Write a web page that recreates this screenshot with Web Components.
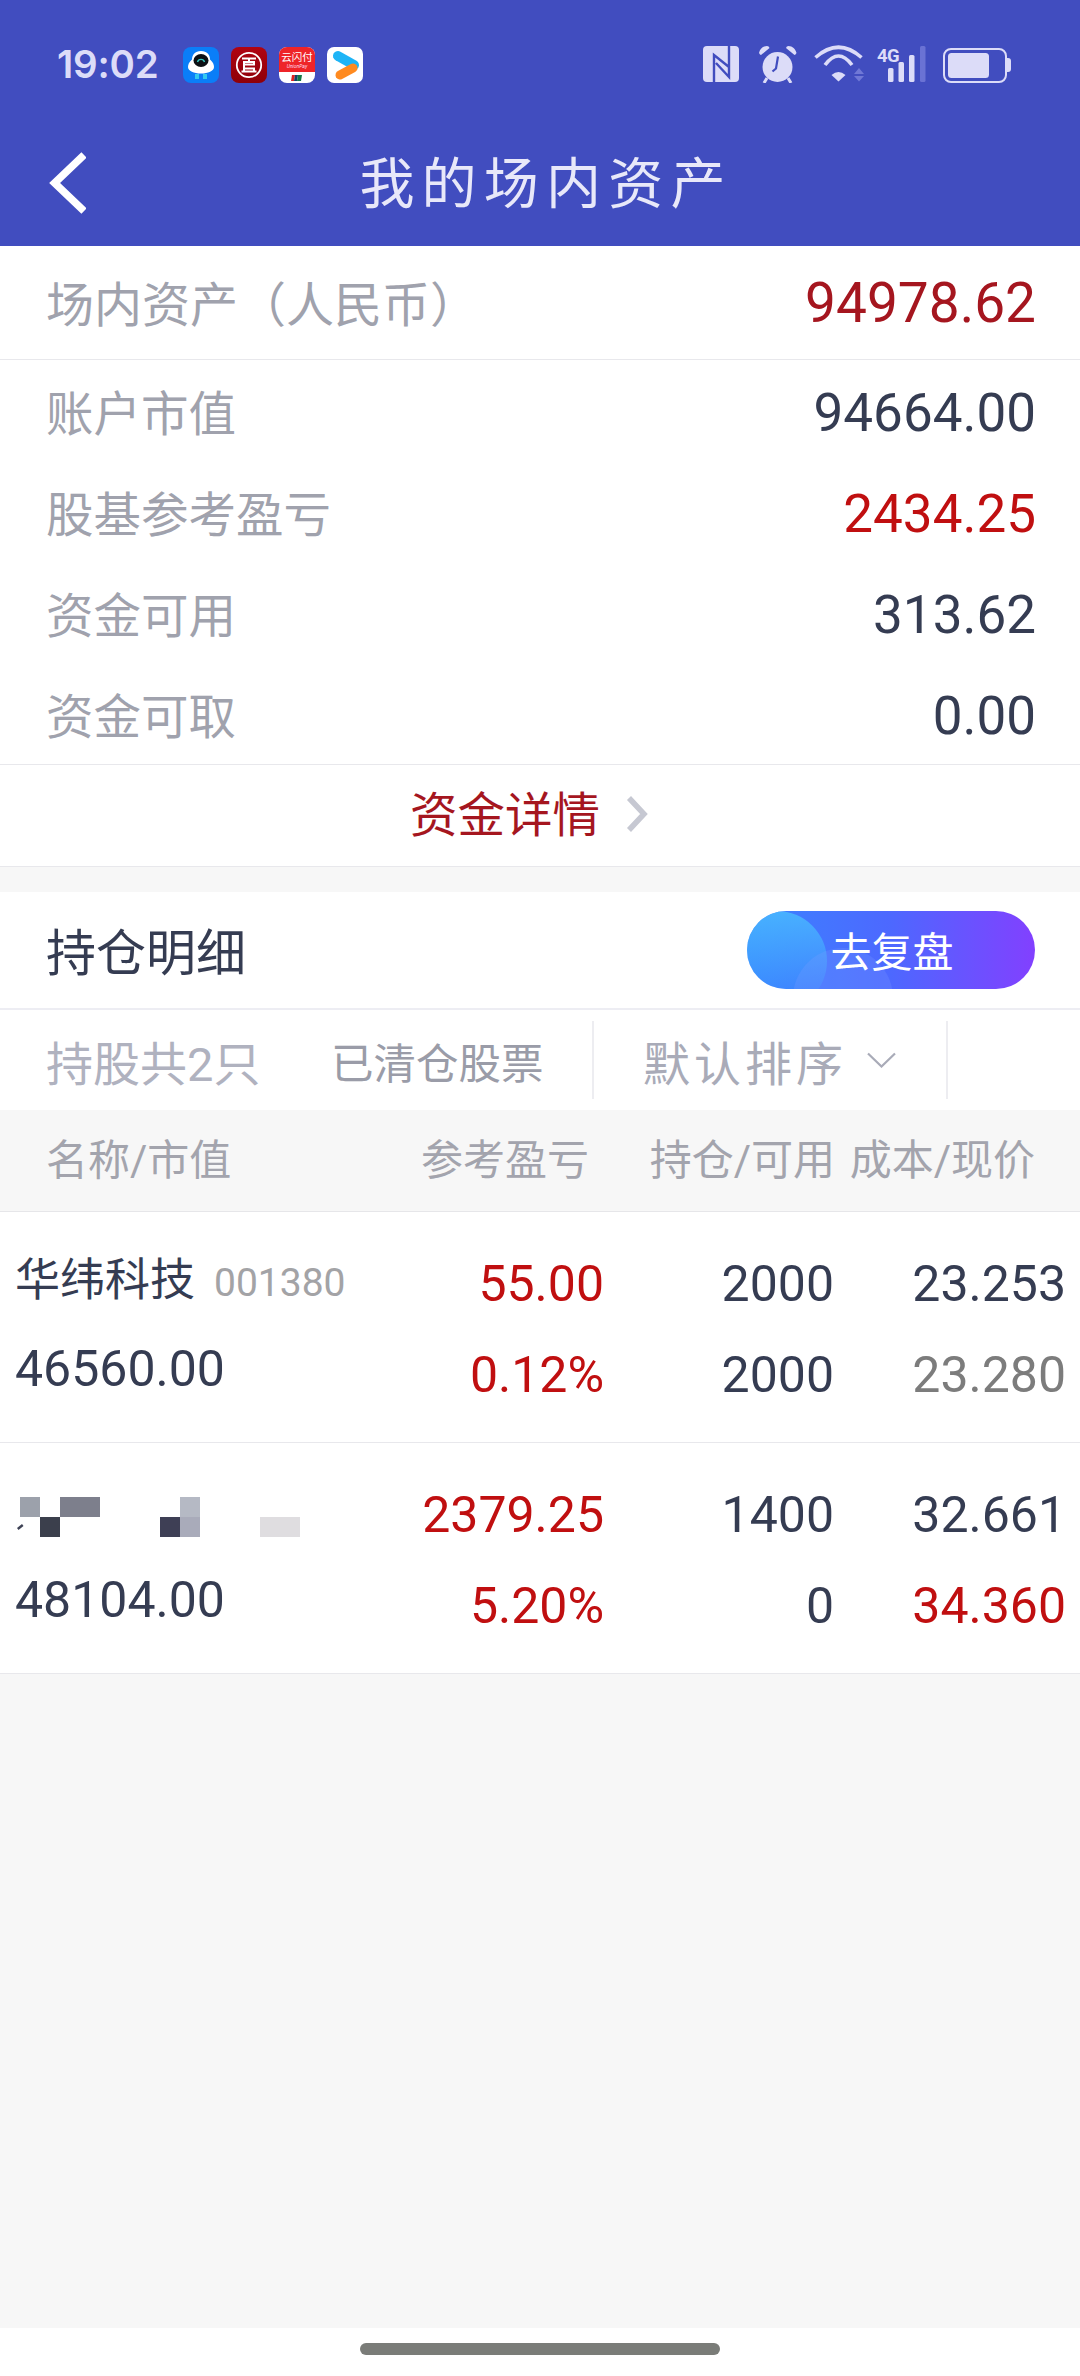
<!DOCTYPE html>
<html lang="zh-CN">
<head>
<meta charset="utf-8">
<title>我的场内资产</title>
<style>
html, body { margin: 0; padding: 0; }
body { font-family: Roboto, "Noto Sans CJK SC", sans-serif; background: #f7f7f7; }
</style>
</head>
<body>
<asset-page>
	<top-bar title="我的场内资产"></top-bar>

	<asset-total>
		<span slot="label">场内资产（人民币）</span>
		<span slot="value">94978.62</span>
	</asset-total>

	<asset-list>
		<asset-row><span slot="label">账户市值</span><span slot="value">94664.00</span></asset-row>
		<asset-row tone="red"><span slot="label">股基参考盈亏</span><span slot="value">2434.25</span></asset-row>
		<asset-row><span slot="label">资金可用</span><span slot="value">313.62</span></asset-row>
		<asset-row><span slot="label">资金可取</span><span slot="value">0.00</span></asset-row>
	</asset-list>

	<fund-link>资金详情</fund-link>

	<hold-title>持仓明细</hold-title>
	<hold-filter></hold-filter>
	<hold-head></hold-head>

	<hold-row>
		<span slot="name">华纬科技</span>
		<span slot="code">001380</span>
		<span slot="worth">46560.00</span>
		<span slot="profit">55.00</span>
		<span slot="rate">0.12%</span>
		<span slot="held">2000</span>
		<span slot="free">2000</span>
		<span slot="cost">23.253</span>
		<span slot="price" class="flat">23.280</span>
	</hold-row>
	<hold-row>
		<name-mosaic slot="name"></name-mosaic>
		<span slot="worth">48104.00</span>
		<span slot="profit">2379.25</span>
		<span slot="rate">5.20%</span>
		<span slot="held">1400</span>
		<span slot="free">0</span>
		<span slot="cost">32.661</span>
		<span slot="price" class="up">34.360</span>
	</hold-row>

	<home-bar></home-bar>
</asset-page>

<script>
class AssetPage extends HTMLElement {
	constructor() {
		super();
		var shadowRoot = this.attachShadow({mode: 'open'});
		shadowRoot.innerHTML = `
	<style>
	:host {
		display: flex;
		flex-direction: column;
		min-height: 2376px;
		background: #f7f7f7;
		color: #353c52;
	}
	</style>
	<slot></slot>
	`;
	}
}

class TopBar extends HTMLElement {
	constructor() {
		super();
		var shadowRoot = this.attachShadow({mode: 'open'});
		shadowRoot.innerHTML = `
	<style>
	:host {
		display: block;
		height: 246px;
		background: #414dbf;
		flex: none;
	}
	.status {
		display: flex;
		align-items: flex-start;
		height: 86px;
		padding: 45px 0 0 57px;
		box-sizing: border-box;
	}
	.time {
		width: 126px;
		font: 600 38.500px/38px Inter, sans-serif;
		color: #dcdcf8;
		letter-spacing: -0.2px;
	}
	.apps {
		display: flex;
		gap: 12px;
		margin-top: 2px;
		margin-right: 340px;
	}
	.apps svg { width: 36px; height: 36px; display: block; }
	.sys svg { display: block; }
	.nav {
		display: flex;
		align-items: center;
		justify-content: center;
		position: relative;
		height: 160px;
		padding-top: 37px;
		box-sizing: border-box;
	}
	.back {
		position: absolute;
		left: 49px;
		top: 66px;
		width: 37px;
		height: 62px;
	}
	h1 {
		margin: 0 0 0 12px;
		font: 400 55px/1 Roboto, "Noto Sans CJK SC", sans-serif;
		letter-spacing: 7.200px;
		color: #e8e8f9;
	}
	</style>
	<div class="status">
		<div class="time">19:02</div>
		<div class="apps">
			<svg viewBox="0 0 36 36"><rect width="36" height="36" rx="8" fill="#0a7ef8"/>
				<path d="M18 4c6 0 9 4 9 8.500 3 2.500 4 5 4 7.500 0 4-6 6.500-13 6.500S5 24 5 20c0-2.500 1-5 4-7.500C9 8 12 4 18 4z" fill="#fff"/>
				<ellipse cx="18" cy="13.500" rx="7.500" ry="6.500" fill="#0c0f14"/>
				<path d="M14.500 15c1-3.500 6-3.500 7 0" fill="none" stroke="#35c8c0" stroke-width="1.400"/>
				<path d="M12 27h4v5h-4zM20 27h4v5h-4z" fill="#33c9ee"/></svg>
			<svg viewBox="0 0 36 36"><defs><linearGradient id="rd" x1="0" y1="0" x2="0" y2="1"><stop offset="0" stop-color="#b00412"/><stop offset="1" stop-color="#8e0008"/></linearGradient></defs>
				<rect width="36" height="36" rx="8" fill="url(#rd)"/>
				<circle cx="18" cy="18" r="12.200" fill="none" stroke="#fff" stroke-width="1.800"/>
				<path d="M11 11.500h14M18 11.500v3.500M13 15h10v2.500H13zM13 17.500v4h10v3H13zM10.500 24.500h15" fill="none" stroke="#fff" stroke-width="2"/></svg>
			<svg viewBox="0 0 36 36"><rect width="36" height="36" rx="8" fill="#fff"/>
				<path d="M0 8a8 8 0 0 1 8-8h20a8 8 0 0 1 8 8v17H0z" fill="#ee2428"/>
				<text x="18" y="14" text-anchor="middle" font-family="Noto Sans CJK SC, sans-serif" font-size="10.500" fill="#fff">云闪付</text>
				<text x="18" y="21" text-anchor="middle" font-family="Roboto, sans-serif" font-style="italic" font-size="5" fill="#fde">UnionPay</text>
				<path d="M13 28h3l-1 6h-3z" fill="#d22"/><path d="M16 28h3l-1 6h-3z" fill="#146"/><path d="M19 28h4l-1 6h-4z" fill="#174"/></svg>
			<svg viewBox="0 0 36 36"><rect width="36" height="36" rx="7" fill="#fff"/>
				<path d="M11 9l16 9" fill="none" stroke="#1eb4f6" stroke-width="10" stroke-linecap="round"/>
				<path d="M26 21L13 28" fill="none" stroke="#ff8a1f" stroke-width="9" stroke-linecap="round"/></svg>
		</div>
		<div class="sys">
			<svg width="310" height="38" viewBox="0 0 310 38" fill="#dcdcf8">
				<rect x="0" y="1" width="36" height="36" rx="4"/>
				<path d="M11 37V10l15 12M26 1v31L13 18" fill="none" stroke="#414dbf" stroke-width="2.400"/>
				<circle cx="74.500" cy="22" r="15"/>
				<path d="M56 8c1-4 4-7 8-7q2 0 2.500 2L58 10q-1 0-2-2zM93.500 8c-1-4-4-7-8-7q-2 0-2.500 2l8.500 7q1 0 2-2z"/>
				<path d="M64 33l-3 5M85 33l3 5" stroke="#dcdcf8" stroke-width="3"/>
				<path d="M75 11.500l-2 12-3.500 3" fill="none" stroke="#414dbf" stroke-width="2.200"/>
				<g fill="none" stroke="#dcdcf8">
					<path d="M112.500 12.500Q135.500-8 158.500 12.500" stroke-width="3.600"/>
					<path d="M122 20Q135.500 2 149 20" stroke-width="3.600"/>
				</g>
				<path d="M128.500 30q7-6 14 0l-7 6.500z"/>
				<path d="M151 29l5-6 5 6zM151 31h10l-5 5.500z" fill="#7078d6"/>
				<text x="174" y="17" font-family="Roboto, sans-serif" font-weight="700" font-size="18.500" letter-spacing="-.6">4G</text>
				<rect x="185" y="23" width="5.500" height="14" rx="1.500"/>
				<rect x="195.500" y="17" width="5.500" height="20" rx="1.500"/>
				<rect x="206" y="10" width="5.500" height="27" rx="1.500"/>
				<rect x="217" y="1" width="5.500" height="36" rx="1.500" fill="#6a72d4"/>
				<rect x="241" y="4" width="62" height="33" rx="7" fill="none" stroke="#dcdcf8" stroke-width="2"/>
				<rect x="245" y="8" width="41" height="25" rx="3.500"/>
				<path d="M304 13h1a3 3 0 0 1 3 3v8a3 3 0 0 1-3 3h-1z"/>
			</svg>
		</div>
	</div>
	<div class="nav">
		<svg class="back" viewBox="0 0 37 62"><path d="M35 3L5.600 31 35 59" fill="none" stroke="#fff" stroke-width="7.500"/></svg>
		<h1></h1>
	</div>
	`;
		shadowRoot.querySelector('h1').textContent = this.getAttribute('title');
	}
}

class AssetTotal extends HTMLElement {
	constructor() {
		super();
		var shadowRoot = this.attachShadow({mode: 'open'});
		shadowRoot.innerHTML = `
	<style>
	:host {
		display: flex;
		align-items: center;
		justify-content: space-between;
		height: 114px;
		padding: 0 44px 0 46px;
		background: #fff;
		border-bottom: 1px solid #e8e8ec;
		box-sizing: border-box;
		flex: none;
	}
	.label { font-size: 48px; color: #a0a2ad; padding-bottom: 3px; }
	.value { font-size: 55px; color: #a5161f; padding-top: 1px; }
	</style>
	<div class="label"><slot name="label"></slot></div>
	<div class="value"><slot name="value"></slot></div>
	`;
	}
}

class AssetList extends HTMLElement {
	constructor() {
		super();
		var shadowRoot = this.attachShadow({mode: 'open'});
		shadowRoot.innerHTML = `
	<style>
	:host {
		display: block;
		background: #fff;
		border-bottom: 1px solid #e8e8ec;
		flex: none;
	}
	</style>
	<slot></slot>
	`;
	}
}

class AssetRow extends HTMLElement {
	constructor() {
		super();
		var shadowRoot = this.attachShadow({mode: 'open'});
		shadowRoot.innerHTML = `
	<style>
	:host {
		display: flex;
		align-items: center;
		justify-content: space-between;
		height: 101px;
		padding: 0 44px 0 46px;
		box-sizing: border-box;
	}
	.label { font-size: 47.500px; color: #a0a2ad; }
	.value { font-size: 53px; color: #353c52; padding-top: 5px; }
	:host([tone=red]) .value { color: #c00f10; }
	</style>
	<div class="label"><slot name="label"></slot></div>
	<div class="value"><slot name="value"></slot></div>
	`;
	}
}

class FundLink extends HTMLElement {
	constructor() {
		super();
		var shadowRoot = this.attachShadow({mode: 'open'});
		shadowRoot.innerHTML = `
	<style>
	:host {
		display: flex;
		align-items: center;
		justify-content: center;
		gap: 24px;
		height: 102px;
		margin-bottom: 25px;
		padding: 0 20px 3px 0;
		background: #fff;
		border-bottom: 1px solid #e8e8ec;
		box-sizing: border-box;
		font-size: 47.500px;
		color: #a5161f;
		flex: none;
	}
	span { padding-bottom: 5px; }
	svg { width: 26px; height: 38px; }
	</style>
	<span><slot></slot></span>
	<svg viewBox="0 0 26 38"><path d="M5 3l15 16L5 35" fill="none" stroke="#c6c8d2" stroke-width="5.500"/></svg>
	`;
	}
}

class HoldTitle extends HTMLElement {
	constructor() {
		super();
		var shadowRoot = this.attachShadow({mode: 'open'});
		shadowRoot.innerHTML = `
	<style>
	:host {
		display: flex;
		align-items: center;
		justify-content: space-between;
		height: 118px;
		padding: 0 45px 0 46px;
		background: #fff;
		border-bottom: 2px solid #ededf3;
		box-sizing: border-box;
		font-size: 50px;
		color: #353c52;
		flex: none;
	}
	.txt { padding-bottom: 3px; }
	.btn {
		position: relative;
		overflow: hidden;
		display: flex;
		align-items: center;
		justify-content: center;
		width: 288px;
		height: 78px;
		border-radius: 39px;
		background: linear-gradient(90deg, #3a84ff 0%, #4d68ff 50%, #8240ff 100%);
		color: #fff;
		font-size: 41px;
		padding: 0 0 3px 2px;
		box-sizing: border-box;
	}
	.btn i {
		position: absolute;
		border-radius: 50%;
	}
	.c1 {
		left: -20px;
		top: 0;
		width: 100px;
		height: 100px;
		background: linear-gradient(180deg, rgba(74, 190, 255, .8), rgba(40, 120, 255, .2));
	}
	.c2 {
		left: 46px;
		top: 37px;
		width: 100px;
		height: 100px;
		background: rgba(130, 160, 255, .22);
	}
	.btn span { position: relative; }
	</style>
	<div class="txt"><slot></slot></div>
	<div class="btn"><i class="c1"></i><i class="c2"></i><span>去复盘</span></div>
	`;
	}
}

class HoldFilter extends HTMLElement {
	constructor() {
		super();
		var shadowRoot = this.attachShadow({mode: 'open'});
		shadowRoot.innerHTML = `
	<style>
	:host {
		display: flex;
		align-items: center;
		height: 100px;
		background: #fff;
		padding-left: 46px;
		box-sizing: border-box;
		color: #b0b2bf;
		flex: none;
	}
	.count { width: 285px; font-size: 47px; }
	.clear { width: 261px; font-size: 42.500px; color: #9a9ca8; }
	.sort {
		display: flex;
		align-items: center;
		width: 356px;
		height: 78px;
		padding-left: 49px;
		box-sizing: border-box;
		border-left: 2px solid #ededf1;
		border-right: 2px solid #ededf1;
		font-size: 47px;
		letter-spacing: 4px;
		color: #a9abb8;
	}
	svg { width: 29px; height: 16px; margin-left: 20px; }
	</style>
	<div class="count">持股共2只</div>
	<div class="clear">已清仓股票</div>
	<div class="sort">默认排序<svg viewBox="0 0 29 16"><path d="M1 1.500l13.500 13L28 1.500" fill="none" stroke="#a9abb8" stroke-width="2.200"/></svg></div>
	`;
	}
}

class HoldHead extends HTMLElement {
	constructor() {
		super();
		var shadowRoot = this.attachShadow({mode: 'open'});
		shadowRoot.innerHTML = `
	<style>
	:host {
		display: grid;
		grid-template-columns: 373px 170px 246px 200px;
		align-items: center;
		height: 102px;
		padding: 0 0 8px 46px;
		background: #f7f7f7;
		border-bottom: 1px solid #e6e6e9;
		box-sizing: border-box;
		font-size: 42px;
		color: #a3a4ad;
		white-space: nowrap;
		flex: none;
	}
	.end { text-align: right; }
	</style>
	<div>名称/市值</div><div class="end">参考盈亏</div><div class="end">持仓/可用</div><div class="end">成本/现价</div>
	`;
	}
}

class HoldRow extends HTMLElement {
	constructor() {
		super();
		var shadowRoot = this.attachShadow({mode: 'open'});
		shadowRoot.innerHTML = `
	<style>
	:host {
		display: grid;
		grid-template-columns: 341px 248px 230px 232px;
		height: 231px;
		padding: 0 14px 0 15px;
		background: #fff;
		border-bottom: 1px solid #e8e8ec;
		box-sizing: border-box;
		font-size: 50px;
		color: #353c52;
		flex: none;
	}
	.col {
		display: flex;
		flex-direction: column;
		align-items: flex-end;
		gap: 31px;
		padding-top: 42px;
	}
	.col div { line-height: 60px; }
	.col.first { align-items: flex-start; gap: 28px; padding-top: 39px; }
	.col .name { display: flex; align-items: baseline; gap: 19px; height: 60px; font-size: 45px; white-space: nowrap; }
	.code { font-size: 39px; color: #a3a3a6; }
	.red { color: #c00f10; }
	::slotted(.flat) { color: #7c7c7c; }
	::slotted(.up) { color: #c00f10; }
	</style>
	<div class="col first">
		<div class="name"><slot name="name"></slot><span class="code"><slot name="code"></slot></span></div>
		<div><slot name="worth"></slot></div>
	</div>
	<div class="col red">
		<div><slot name="profit"></slot></div>
		<div><slot name="rate"></slot></div>
	</div>
	<div class="col">
		<div><slot name="held"></slot></div>
		<div><slot name="free"></slot></div>
	</div>
	<div class="col">
		<div><slot name="cost"></slot></div>
		<div><slot name="price"></slot></div>
	</div>
	`;
	}
}

// the second name is pixelated in the screenshot
class NameMosaic extends HTMLElement {
	constructor() {
		super();
		var shadowRoot = this.attachShadow({mode: 'open'});
		shadowRoot.innerHTML = `
	<style>
	:host { display: block; width: 290px; height: 60px; }
	svg { display: block; }
	</style>
	<svg width="290" height="60" viewBox="0 0 290 60">
		<rect x="5" y="15" width="20" height="20" fill="#9ca1ab"/>
		<rect x="45" y="15" width="40" height="20" fill="#7d7f8c"/>
		<rect x="25" y="35" width="20" height="20" fill="#3b3f4c"/>
		<path d="M2 46l5-4 1.500 2-5 4z" fill="#3e4255"/>
		<rect x="165" y="15" width="20" height="20" fill="#b5b9c4"/>
		<rect x="145" y="35" width="20" height="20" fill="#3e3f55"/>
		<rect x="165" y="35" width="20" height="20" fill="#a9abba"/>
		<rect x="245" y="35" width="40" height="20" fill="#dfdde0"/>
	</svg>
	`;
	}
}

class HomeBar extends HTMLElement {
	constructor() {
		super();
		var shadowRoot = this.attachShadow({mode: 'open'});
		shadowRoot.innerHTML = `
	<style>
	:host {
		display: flex;
		justify-content: center;
		margin-top: auto;
		height: 48px;
		padding-top: 15px;
		box-sizing: border-box;
		background: #fff;
		flex: none;
	}
	div {
		width: 360px;
		height: 12px;
		border-radius: 6px;
		background: #7a7c78;
	}
	</style>
	<div></div>
	`;
	}
}

customElements.define('asset-page', AssetPage);
customElements.define('top-bar', TopBar);
customElements.define('asset-total', AssetTotal);
customElements.define('asset-list', AssetList);
customElements.define('asset-row', AssetRow);
customElements.define('fund-link', FundLink);
customElements.define('hold-title', HoldTitle);
customElements.define('hold-filter', HoldFilter);
customElements.define('hold-head', HoldHead);
customElements.define('hold-row', HoldRow);
customElements.define('name-mosaic', NameMosaic);
customElements.define('home-bar', HomeBar);
</script>
</body>
</html>
